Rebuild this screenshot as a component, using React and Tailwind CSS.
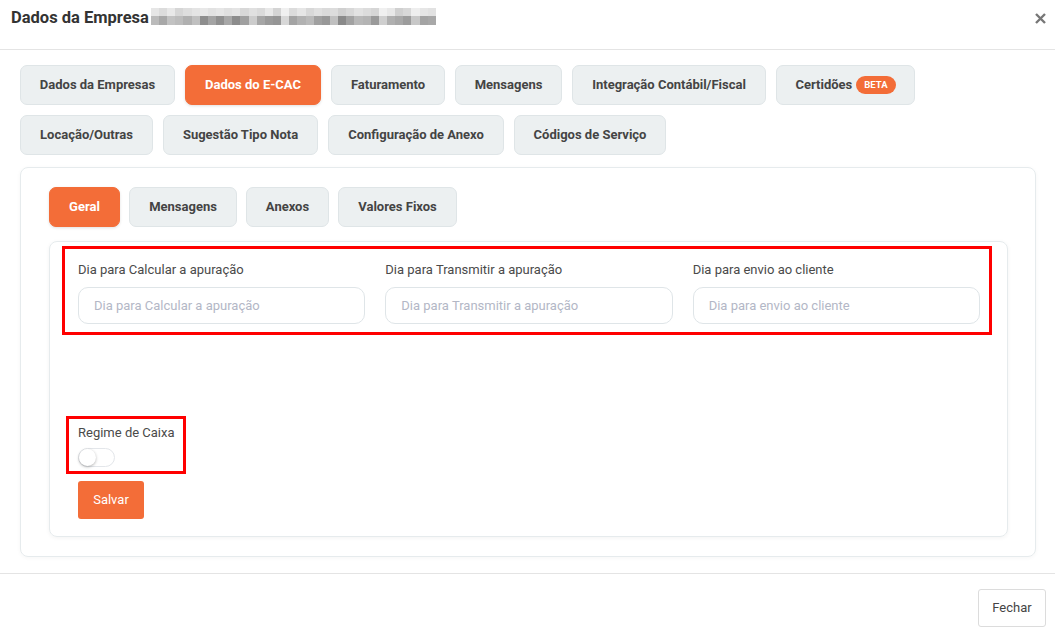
import React from "react";

const TOP = ['#e6e6e6','#dcdcdc','#e8e8e8','#d6d6d6','#dedede','#e4e4e4','#e8e8e8','#e2e2e2','#e6e6e6','#e0e0e0','#e4e4e4','#d8d8d8','#e0e0e0','#dadada','#e8e8e8','#d4d4d4','#f0f0f0','#dcdcdc','#e6e6e6','#d8d8d8','#e0e0e0','#dadada','#dcdcdc','#d0d0d0','#d8d8d8','#e2e2e2','#dcdcdc','#d6d6d6','#f0f0f0','#e8e8e8','#d0d0d0','#d8d8d8','#eeeeee','#e6e6e6','#e2e2e2'];
const BOT = ['#bbbbbb','#a8a8a8','#c2c2c2','#bcbcbc','#b0b0b0','#c0c0c0','#8e8e8e','#a4a4a4','#909090','#a8a8a8','#8c8c8c','#a0a0a0','#cccccc','#a6a6a6','#9a9a9a','#959595','#d8d8d8','#a4a4a4','#b2b2b2','#bababa','#a0a0a0','#989898','#c0c0c0','#8a8a8a','#a2a2a2','#b8b8b8','#b4b4b4','#9a9a9a','#cfcfcf','#b0b0b0','#a8a8a8','#9c9c9c','#c8c8c8','#a4a4a4','#a8a8a8'];

function Blur() {
  return (
    <div className="flex flex-col w-[285px] ml-[2px] mt-[0px]">
      <div className="flex h-[8px]">
        {TOP.map((c, i) => (
          <div key={i} className="flex-1" style={{ background: c }} />
        ))}
      </div>
      <div className="flex h-[9px]">
        {BOT.map((c, i) => (
          <div key={i} className="flex-1" style={{ background: c }} />
        ))}
      </div>
    </div>
  );
}

function Tab({ children, active, w }) {
  return (
    <div
      className={
        "h-[40px] flex items-center justify-center rounded-[7px] text-[13px] font-bold border " +
        (active
          ? "bg-[#f36d38] border-[#f36d38] text-white shadow-[0_1px_3px_rgba(0,0,0,0.12)]"
          : "bg-[#ecf0f1] border-[#dfe5e7] text-[#444]")
      }
      style={{ width: w }}
    >
      {children}
    </div>
  );
}

function Field({ label }) {
  return (
    <div className="flex flex-col">
      <div className="text-[13px] text-[#4a4a4a] leading-[17px] h-[17px]">{label}</div>
      <div className="mt-[9px] h-[37px] rounded-[10px] border border-[#dfe5e8] bg-white flex items-center pl-[15px] text-[13px] text-[#b3b7c6]">
        {label}
      </div>
    </div>
  );
}

export default function App() {
  return (
    <div
      className="w-[1055px] h-[636px] bg-white flex flex-col overflow-hidden"
      style={{ fontFamily: "Roboto, 'Liberation Sans', sans-serif" }}
    >
      {/* header */}
      <div className="h-[50px] border-b border-[#e4e4e4] flex items-start pt-[8px] pl-[11px] pr-[8px]">
        <div className="text-[16.5px] font-bold text-[#333] leading-[20px]">Dados da Empresa</div>
        <Blur />
        <div className="flex-1" />
        <svg width="11" height="11" viewBox="0 0 11 11" className="mt-[5px] mr-[1px]">
          <path d="M1 1 L10 10 M10 1 L1 10" stroke="#777" strokeWidth="2.4" strokeLinecap="butt" />
        </svg>
      </div>

      {/* body */}
      <div className="flex-1 px-[20px] pt-[15px] pb-[15px] flex flex-col">
        <div className="flex gap-[10px]">
          <Tab w={155}>Dados da Empresas</Tab>
          <Tab w={136} active>Dados do E-CAC</Tab>
          <Tab w={114}>Faturamento</Tab>
          <Tab w={107}>Mensagens</Tab>
          <Tab w={194}>Integração Contábil/Fiscal</Tab>
          <Tab w={139}>
            <span>Certidões</span>
            <span className="ml-[4px] h-[18px] px-[8px] rounded-full bg-[#f36d38] text-white text-[9.5px] font-bold flex items-center">BETA</span>
          </Tab>
        </div>
        <div className="flex gap-[10px] mt-[10px]">
          <Tab w={133}>Locação/Outras</Tab>
          <Tab w={155}>Sugestão Tipo Nota</Tab>
          <Tab w={176}>Configuração de Anexo</Tab>
          <Tab w={152}>Códigos de Serviço</Tab>
        </div>

        {/* outer card */}
        <div className="mt-[12px] w-[1016px] h-[390px] border border-[#e6ebed] rounded-[8px] shadow-[0_1px_4px_rgba(0,0,0,0.04)] pt-[19px] pl-[28px] pr-[27px] pb-[19px] flex flex-col">
          <div className="flex gap-[9px]">
            <Tab w={71} active>Geral</Tab>
            <Tab w={108}>Mensagens</Tab>
            <Tab w={83}>Anexos</Tab>
            <Tab w={119}>Valores Fixos</Tab>
          </div>

          <div className="mt-[14px] flex-1 border border-[#e6ebed] rounded-[8px] shadow-[0_1px_4px_rgba(0,0,0,0.05)] pt-[4px] pl-[12px] pr-[15px] flex flex-col">
            <div className="border-[3px] border-[#ff0000] pl-[13px] pr-[9px] pt-[12px] pb-[8px] grid grid-cols-3 gap-[20px]">
              <Field label="Dia para Calcular a apuração" />
              <Field label="Dia para Transmitir a apuração" />
              <Field label="Dia para envio ao cliente" />
            </div>

            <div className="mt-[81px] ml-[4px] w-[120px] h-[58px] border-[3px] border-[#ff0000] pl-[9px] pt-[5px]">
              <div className="text-[13px] text-[#4a4a4a] leading-[17px]">Regime de Caixa</div>
              <div className="mt-[7px] w-[37px] h-[19px] rounded-full border border-[#e3e6ea] bg-white relative">
                <div className="absolute left-[0px] top-[0px] w-[17px] h-[17px] rounded-full bg-white shadow-[0_1px_3px_rgba(0,0,0,0.3)]" />
              </div>
            </div>

            <div className="mt-[7px] ml-[16px] w-[66px] h-[38px] bg-[#f36d38] rounded-[3px] text-white text-[13px] flex items-center justify-center">
              Salvar
            </div>
          </div>
        </div>
      </div>

      {/* footer */}
      <div className="h-[63px] border-t border-[#e4e4e4] flex justify-end pt-[15px] pr-[9px]">
        <div className="w-[68px] h-[38px] border border-[#dcdcdc] rounded-[3px] text-[13px] text-[#444] flex items-center justify-center">
          Fechar
        </div>
      </div>
    </div>
  );
}
